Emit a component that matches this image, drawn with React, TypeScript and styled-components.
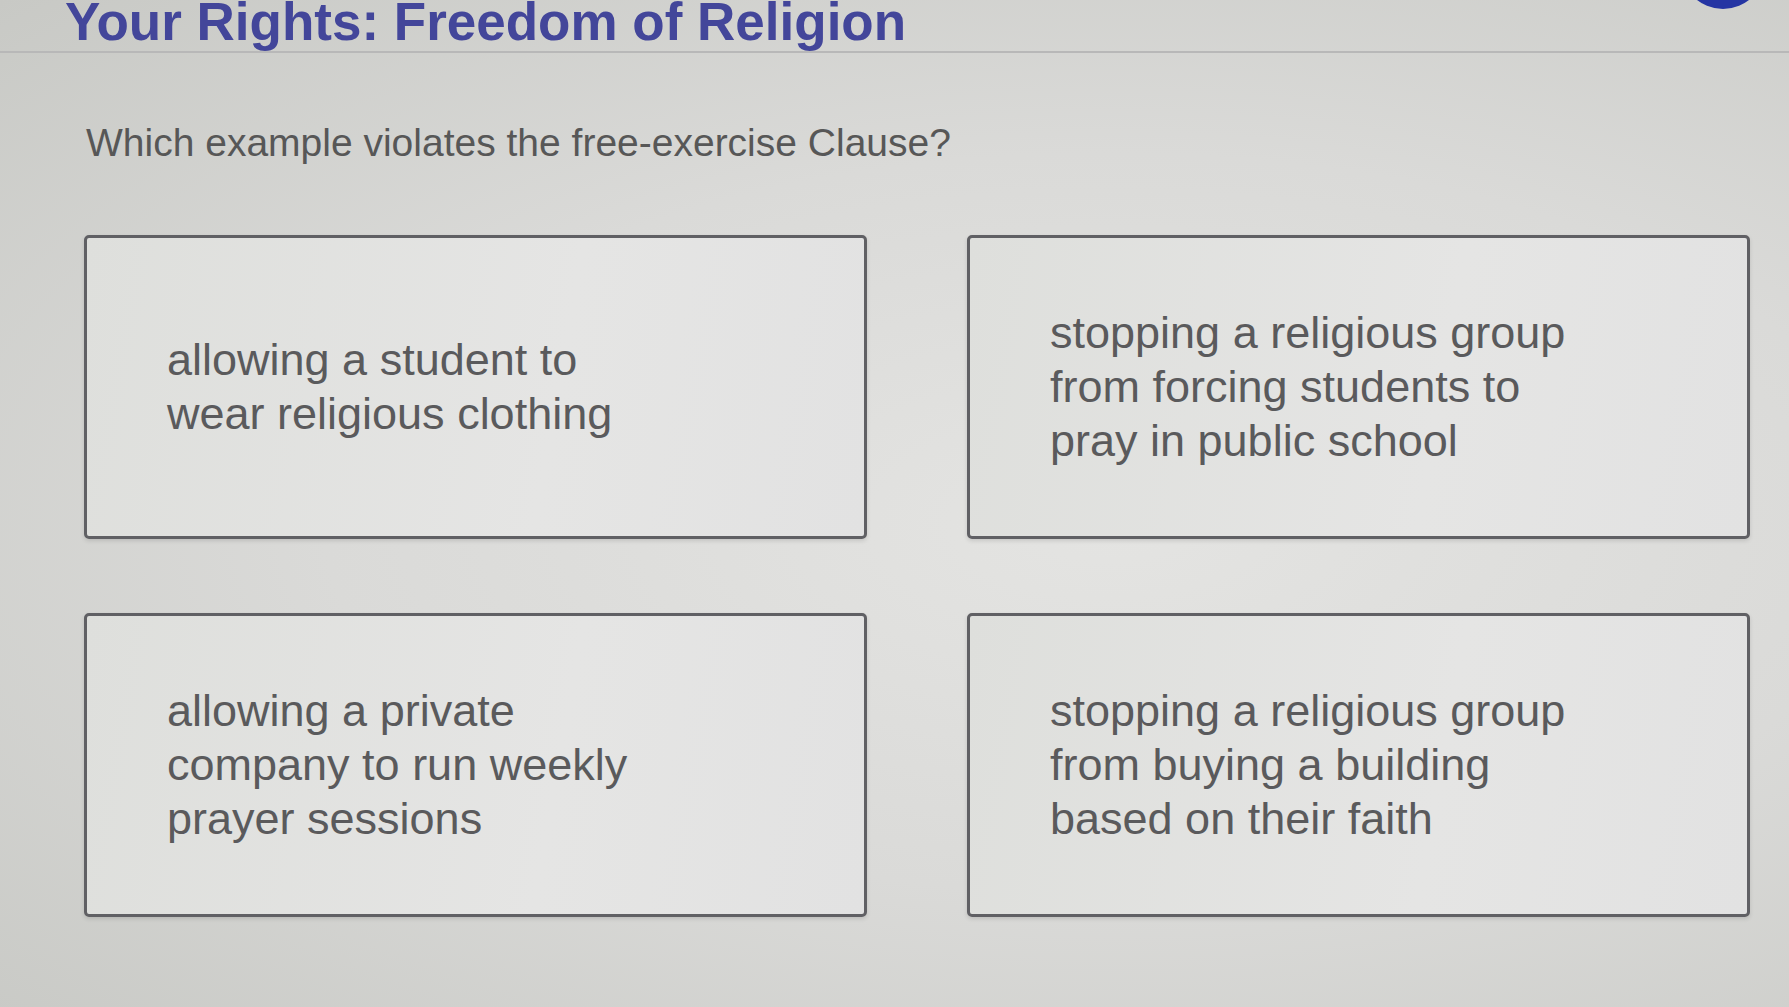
import React from 'react';
import styled, { createGlobalStyle } from 'styled-components';

const options = [
    ['allowing a student to', 'wear religious clothing'],
    ['stopping a religious group', 'from forcing students to', 'pray in public school'],
    ['allowing a private', 'company to run weekly', 'prayer sessions'],
    ['stopping a religious group', 'from buying a building', 'based on their faith'],
];

const App = () => {
    return <Page>
        <GlobalStyle />
        <Header>
            <Title>Your Rights: Freedom of Religion</Title>
            <Avatar />
        </Header>
        <Question>Which example violates the free-exercise Clause?</Question>
        <Grid>
            {options.map((lines, i) => (
                <Card key={i}>
                    <CardText>
                        {lines.map((l) => <div key={l}>{l}</div>)}
                    </CardText>
                </Card>
            ))}
        </Grid>
    </Page>
}

export default App

const GlobalStyle = createGlobalStyle`
    html, body {
        margin: 0;
        padding: 0;
    }
    body {
        font-family: "Liberation Sans", Arial, sans-serif;
        overflow: hidden;
    }
`
const Page = styled.main`
    width: 1789px;
    height: 1007px;
    overflow: hidden;
    background: radial-gradient(ellipse at 62% 52%, #e4e4e2 0%, #dadad8 50%, #c8c9c5 100%);
`
const Header = styled.header`
    display: flex;
    justify-content: space-between;
    align-items: flex-start;
    height: 51px;
    padding: 0 24px 0 65px;
    border-bottom: 2px solid #b8b8b8;
`
const Title = styled.h1`
    margin: 0;
    font-size: 53px;
    line-height: 44px;
    font-weight: bold;
    color: #43469a;
    white-space: nowrap;
`
const Avatar = styled.div`
    width: 84px;
    height: 84px;
    margin-top: -75px;
    border-radius: 50%;
    background: #2535a3;
`
const Question = styled.p`
    margin: 67px 0 0 86px;
    font-size: 39px;
    line-height: 45px;
    color: #575757;
`
const Grid = styled.section`
    display: grid;
    grid-template-columns: 1fr 1fr;
    grid-auto-rows: 304px;
    column-gap: 100px;
    row-gap: 74px;
    margin-top: 70px;
    padding: 0 39px 0 84px;
`
const Card = styled.div`
    display: flex;
    align-items: center;
    padding: 0 40px 0 80px;
    border: 3px solid #606064;
    border-radius: 5px;
    background: linear-gradient(100deg, #dedfdc 0%, #e5e5e4 60%, #e2e2e2 100%);
    box-shadow: 0 2px 4px rgba(0, 0, 0, 0.12);
`
const CardText = styled.div`
    font-size: 45px;
    line-height: 54px;
    color: #5a5a5c;
`
